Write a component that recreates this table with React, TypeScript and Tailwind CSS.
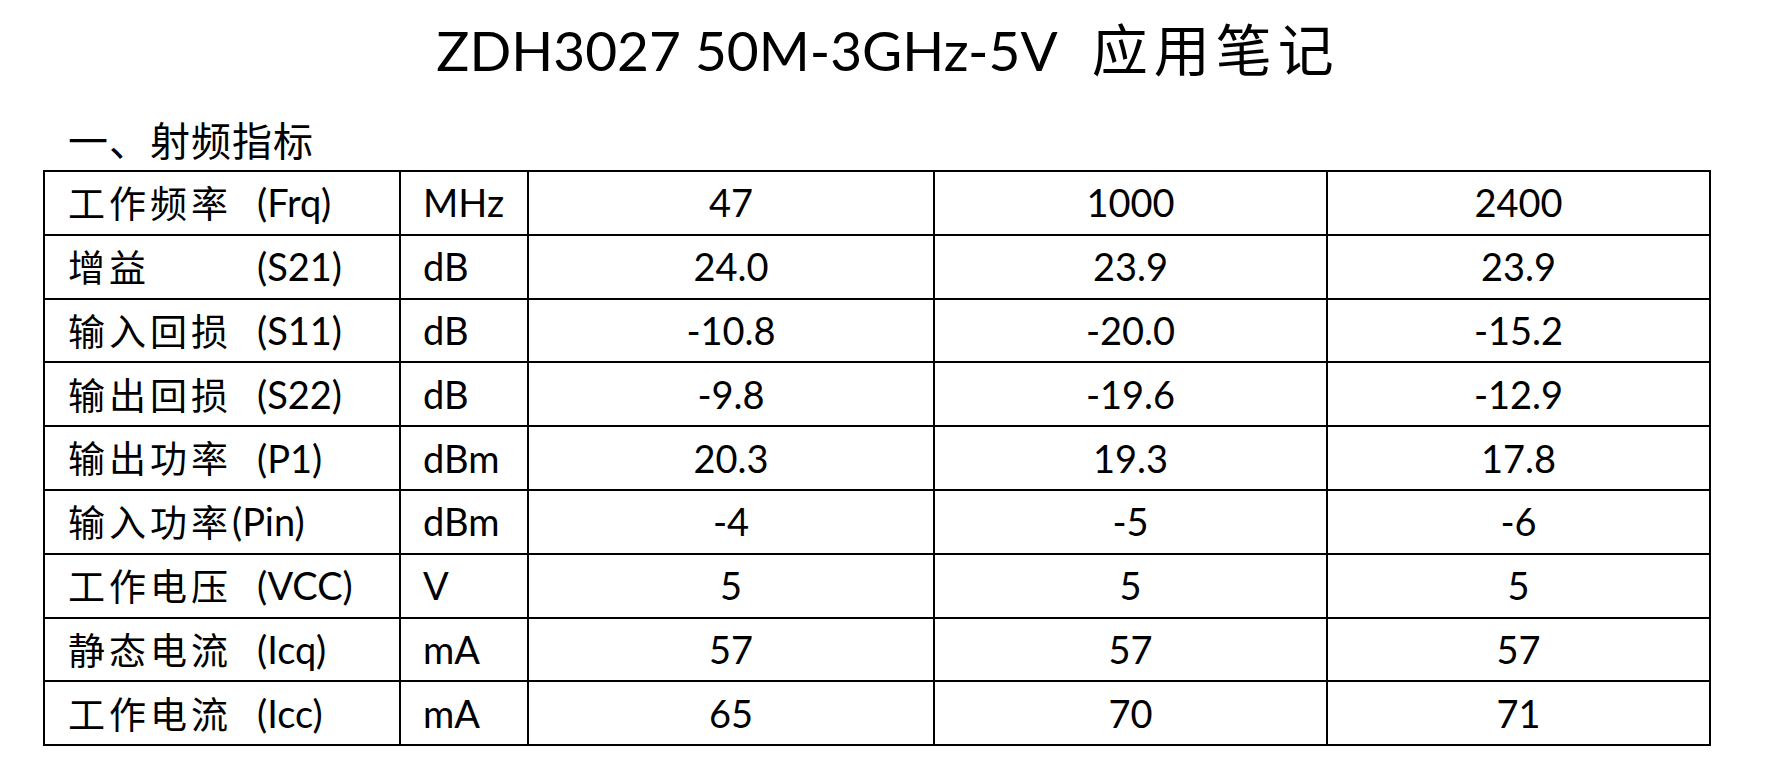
import React from 'react';

type Row = {
  label: string;
  code: string;
  tight?: boolean;
  unit: string;
  values: string[];
};

const rows: Row[] = [
  { label: '工作频率', code: '(Frq)', unit: 'MHz', values: ['47', '1000', '2400'] },
  { label: '增益', code: '(S21)', unit: 'dB', values: ['24.0', '23.9', '23.9'] },
  { label: '输入回损', code: '(S11)', unit: 'dB', values: ['-10.8', '-20.0', '-15.2'] },
  { label: '输出回损', code: '(S22)', unit: 'dB', values: ['-9.8', '-19.6', '-12.9'] },
  { label: '输出功率', code: '(P1)', unit: 'dBm', values: ['20.3', '19.3', '17.8'] },
  { label: '输入功率', code: '(Pin)', tight: true, unit: 'dBm', values: ['-4', '-5', '-6'] },
  { label: '工作电压', code: '(VCC)', unit: 'V', values: ['5', '5', '5'] },
  { label: '静态电流', code: '(Icq)', unit: 'mA', values: ['57', '57', '57'] },
  { label: '工作电流', code: '(Icc)', unit: 'mA', values: ['65', '70', '71'] },
];

const cjk = "font-['Noto_Sans_CJK_SC',sans-serif]";
const latin = "font-['Lato','Noto_Sans_CJK_SC',sans-serif]";

const App: React.FC = () => {
  return (
    <div className="min-h-[774px] w-[1776px] bg-white text-black">
      {/* Title */}
      <div className="h-[119px] pt-[19px] flex justify-center items-baseline">
        <span className={`${latin} text-[55px] leading-none`}>ZDH3027 50M-3GHz-5V</span>
        <span className={`${cjk} text-[56px] leading-none tracking-[6px] ml-[34px]`}>应用笔记</span>
      </div>

      {/* Section header */}
      <div className={`${cjk} h-[51px] pl-[68px] text-[40px] leading-none tracking-[1px]`}>一、射频指标</div>

      {/* Spec table */}
      <div className="ml-[43px] w-max grid grid-cols-[354px_126px_404px_391px_381px] auto-rows-[61.8px] gap-[2px] p-[2px] bg-black">
        {rows.map((r) => (
          <React.Fragment key={r.label}>
            <div className="bg-white flex items-center pl-[23px] whitespace-nowrap">
              <span
                className={`${cjk} text-[37px] tracking-[4px] inline-block ${r.tight ? '' : 'w-[189px]'}`}
              >
                {r.label}
              </span>
              <span className={`${latin} text-[38px]`}>{r.code}</span>
            </div>
            <div className={`bg-white flex items-center pl-[22px] ${latin} text-[38px]`}>{r.unit}</div>
            {r.values.map((v, i) => (
              <div key={i} className={`bg-white flex items-center justify-center ${latin} text-[38px]`}>
                {v}
              </div>
            ))}
          </React.Fragment>
        ))}
      </div>
    </div>
  );
};

export default App;
